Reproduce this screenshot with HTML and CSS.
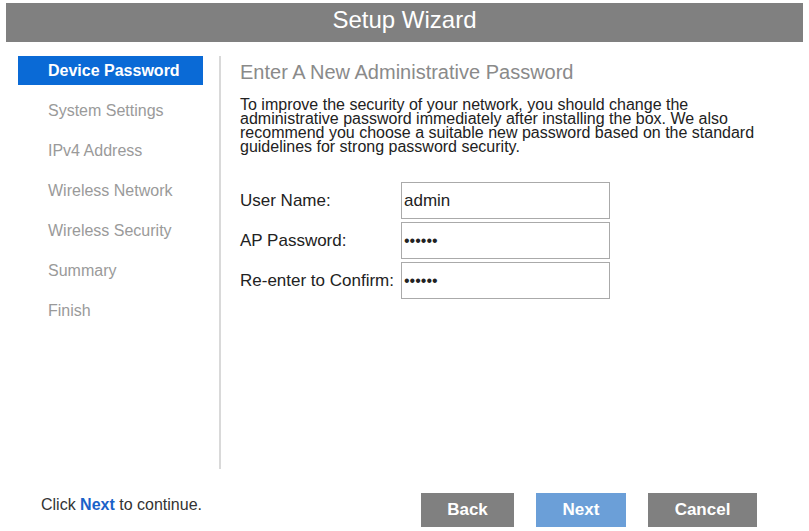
FILE: index.html
```html
<!DOCTYPE html>
<html>
<head>
<meta charset="utf-8">
<title>Setup Wizard</title>
<link rel="stylesheet" href="styles.css">
</head>
<body>
<header class="topbar">Setup Wizard</header>
<div class="wizard">
  <nav class="steps">
    <div class="step active">Device Password</div>
    <div class="step">System Settings</div>
    <div class="step">IPv4 Address</div>
    <div class="step">Wireless Network</div>
    <div class="step">Wireless Security</div>
    <div class="step">Summary</div>
    <div class="step">Finish</div>
  </nav>
  <main class="content">
    <h1 class="title">Enter A New Administrative Password</h1>
    <p class="intro">To improve the security of your network, you should change the administrative password immediately after installing the box. We also recommend you choose a suitable new password based on the standard guidelines for strong password security.</p>
    <div class="form">
      <div class="row"><label class="label">User Name:</label><div class="input">admin</div></div>
      <div class="row"><label class="label">AP Password:</label><div class="input dots">&bull;&bull;&bull;&bull;&bull;&bull;</div></div>
      <div class="row"><label class="label">Re-enter to Confirm:</label><div class="input dots">&bull;&bull;&bull;&bull;&bull;&bull;</div></div>
    </div>
  </main>
</div>
<footer class="footer">
  <div class="hint">Click <b class="hint-next">Next</b> to continue.</div>
  <div class="buttons">
    <button class="btn back">Back</button>
    <button class="btn next">Next</button>
    <button class="btn cancel">Cancel</button>
  </div>
</footer>
</body>
</html>
```
FILE: styles.css
```css
* { box-sizing: border-box; }
html, body { margin: 0; padding: 0; background: #fff; }
body {
  font-family: "Liberation Sans", Arial, sans-serif;
  width: 809px;
  height: 531px;
  overflow: hidden;
}
.topbar {
  margin: 3px 6px 0 6px;
  height: 39px;
  padding-bottom: 6px;
  background: #808080;
  color: #fff;
  font-size: 24px;
  line-height: 33px;
  text-align: center;
}
.wizard {
  display: flex;
  margin-top: 14px;
  height: 413px;
}
.steps {
  width: 219px;
  padding-left: 18px;
  padding-right: 16px;
}
.step {
  height: 29px;
  line-height: 29px;
  margin-bottom: 11px;
  padding-left: 30px;
  font-size: 16px;
  color: #9a9a9a;
}
.step.active {
  background: #0a6ad6;
  color: #fff;
  font-weight: bold;
}
.content {
  border-left: 2px solid #d9d9d9;
  padding-left: 19px;
  width: 565px;
}
.title {
  margin: 4px 0 0 0;
  font-size: 20px;
  font-weight: normal;
  line-height: 24px;
  color: #8a8a8a;
}
.intro {
  margin: 14px 0 0 0;
  font-size: 16px;
  line-height: 14px;
  color: #222;
}
.form {
  margin-top: 28px;
  display: flex;
  flex-direction: column;
  gap: 3px;
}
.row {
  display: flex;
  align-items: center;
}
.label {
  width: 161px;
  font-size: 17px;
  color: #222;
}
.input {
  width: 209px;
  height: 37px;
  border: 1px solid #aaa;
  padding-left: 2px;
  line-height: 35px;
  font-size: 17px;
  color: #222;
}
.input.dots {
  font-size: 16px;
}
.footer {
  display: flex;
  align-items: center;
  margin-top: 24px;
  height: 34px;
}
.hint {
  width: 421px;
  padding-left: 41px;
  padding-bottom: 10px;
  font-size: 16px;
  color: #333;
}
.hint-next { color: #1a62c9; }
.buttons {
  display: flex;
  gap: 22px;
}
.btn {
  height: 34px;
  border: 0;
  color: #fff;
  font-family: "Liberation Sans", Arial, sans-serif;
  font-weight: bold;
  font-size: 17px;
  padding: 0;
}
.back { width: 93px; background: #808080; }
.next { width: 90px; background: #6b9fd8; }
.cancel { width: 109px; background: #808080; }
```
